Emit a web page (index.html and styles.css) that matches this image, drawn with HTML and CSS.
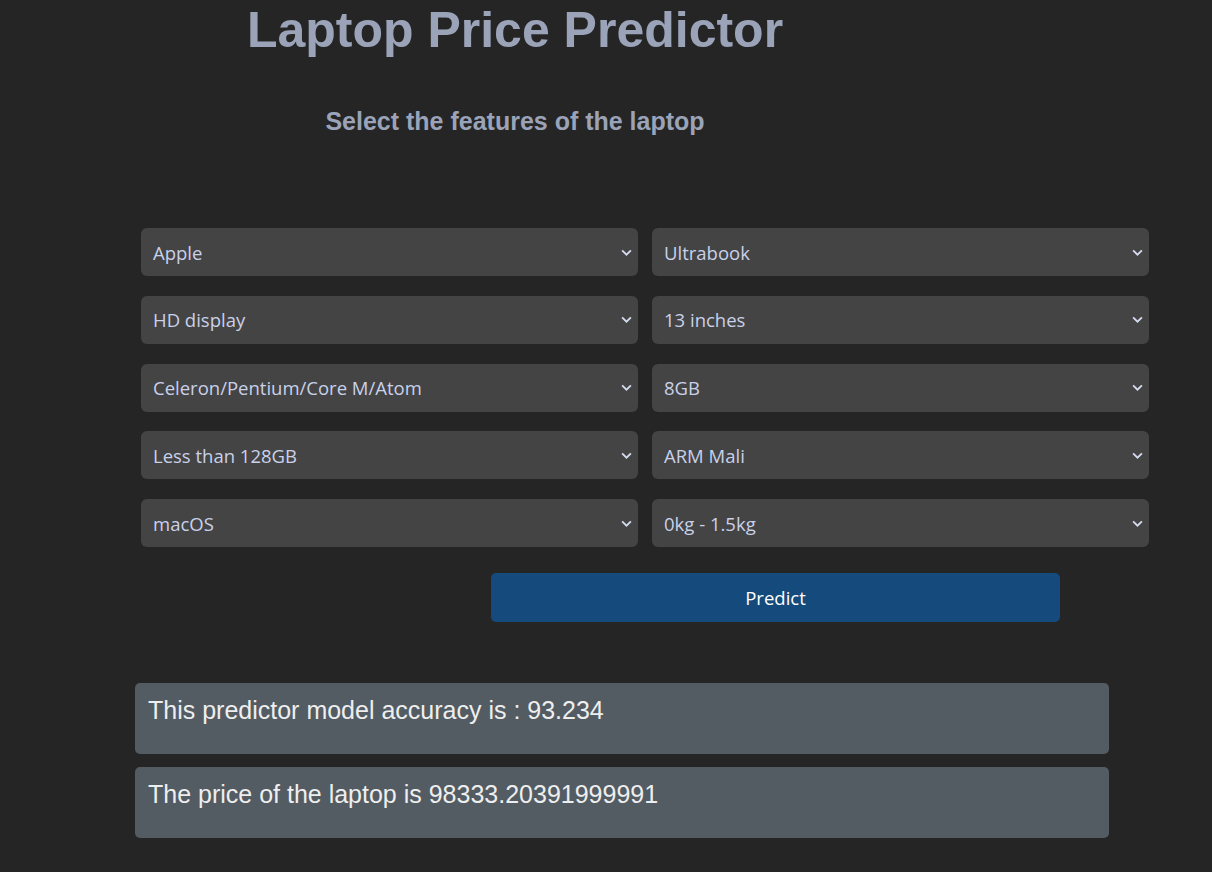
FILE: index.html
```html
<!DOCTYPE html>
<html lang="en">
<head>
<meta charset="utf-8">
<title>Laptop Price Predictor</title>
<link rel="stylesheet" href="styles.css">
</head>
<body>
<div class="page">
  <header class="header">
    <h1 class="title">Laptop Price Predictor</h1>
    <h3 class="subtitle">Select the features of the laptop</h3>
  </header>
  <form class="form">
    <div class="grid">
      <div class="select"><span>Apple</span><svg class="chev" viewBox="0 0 10 6"><path d="M1 1 L5 5 L9 1"/></svg></div>
      <div class="select"><span>Ultrabook</span><svg class="chev" viewBox="0 0 10 6"><path d="M1 1 L5 5 L9 1"/></svg></div>
      <div class="select"><span>HD display</span><svg class="chev" viewBox="0 0 10 6"><path d="M1 1 L5 5 L9 1"/></svg></div>
      <div class="select"><span>13 inches</span><svg class="chev" viewBox="0 0 10 6"><path d="M1 1 L5 5 L9 1"/></svg></div>
      <div class="select"><span>Celeron/Pentium/Core M/Atom</span><svg class="chev" viewBox="0 0 10 6"><path d="M1 1 L5 5 L9 1"/></svg></div>
      <div class="select"><span>8GB</span><svg class="chev" viewBox="0 0 10 6"><path d="M1 1 L5 5 L9 1"/></svg></div>
      <div class="select"><span>Less than 128GB</span><svg class="chev" viewBox="0 0 10 6"><path d="M1 1 L5 5 L9 1"/></svg></div>
      <div class="select"><span>ARM Mali</span><svg class="chev" viewBox="0 0 10 6"><path d="M1 1 L5 5 L9 1"/></svg></div>
      <div class="select"><span>macOS</span><svg class="chev" viewBox="0 0 10 6"><path d="M1 1 L5 5 L9 1"/></svg></div>
      <div class="select"><span>0kg - 1.5kg</span><svg class="chev" viewBox="0 0 10 6"><path d="M1 1 L5 5 L9 1"/></svg></div>
    </div>
    <div class="actions">
      <button type="button" class="predict">Predict</button>
    </div>
  </form>
  <section class="results">
    <div class="result">This predictor model accuracy is : 93.234</div>
    <div class="result">The price of the laptop is 98333.20391999991</div>
  </section>
</div>
</body>
</html>
```

FILE: styles.css
```css
html, body {
  margin: 0;
  padding: 0;
  background: #252525;
}

.page {
  width: 1212px;
  min-height: 872px;
  box-sizing: border-box;
}

.header {
  width: 1030px;
  text-align: center;
  font-family: "Liberation Sans", Arial, sans-serif;
  color: #9aa3b8;
}

.title {
  margin: 0;
  font-size: 50px;
  font-weight: bold;
  line-height: 60px;
}

.subtitle {
  margin: 45px 0 0 0;
  font-size: 25px;
  font-weight: bold;
  line-height: 32px;
}

.form {
  margin: 91px 0 0 141px;
  width: 1009px;
}

.grid {
  display: grid;
  grid-template-columns: 497px 497px;
  column-gap: 14px;
  row-gap: 19.75px;
}

.select {
  height: 48px;
  background: #444444;
  border-radius: 6px;
  display: flex;
  align-items: center;
  justify-content: space-between;
  padding: 0 6px 0 12px;
  box-sizing: border-box;
  font-family: "Open Sans", "Noto Sans", sans-serif;
  font-size: 18.5px;
  color: #c9d1ea;
}

.chev {
  width: 11px;
  height: 7px;
  fill: none;
  stroke: #d6dcf0;
  stroke-width: 1.6;
}

.actions {
  margin-top: 26px;
  padding-left: 350px;
}

.predict {
  width: 569px;
  height: 49px;
  border: none;
  border-radius: 5px;
  background: #154a7c;
  color: #ffffff;
  font-family: "Open Sans", "Noto Sans", sans-serif;
  font-size: 18.5px;
  padding: 0;
}

.results {
  margin: 61px 0 0 135px;
  width: 974px;
  display: flex;
  flex-direction: column;
  gap: 13px;
}

.result {
  height: 71px;
  box-sizing: border-box;
  background: #535b63;
  border-radius: 5px;
  padding: 13px 13px 0 13px;
  font-family: "Liberation Sans", Arial, sans-serif;
  font-size: 25px;
  line-height: 29px;
  color: #eeeeee;
}
```
